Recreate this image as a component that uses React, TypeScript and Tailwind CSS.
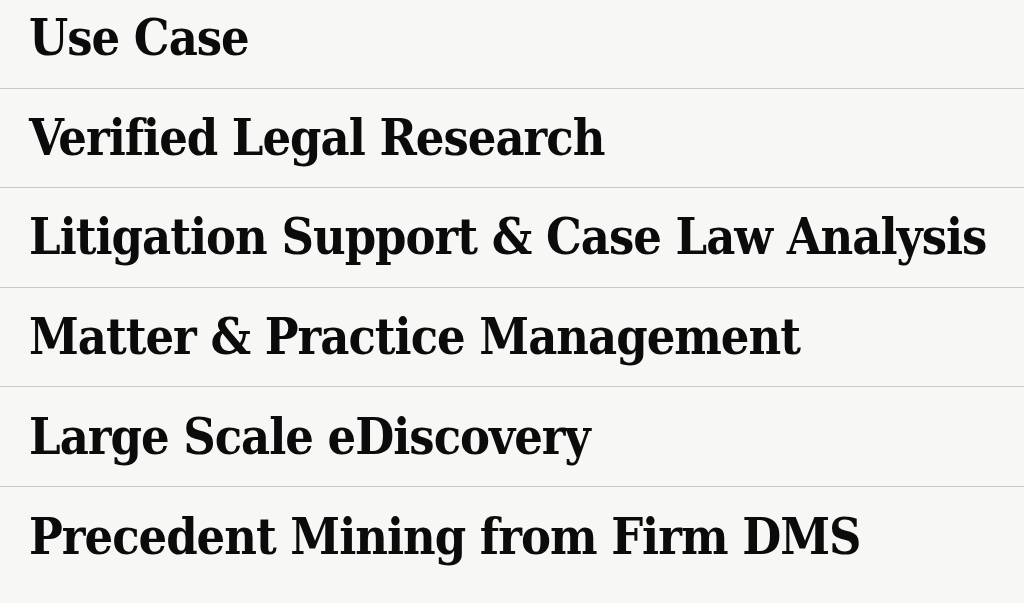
import React from "react";

const rows = [
  "Use Case",
  "Verified Legal Research",
  "Litigation Support & Case Law Analysis",
  "Matter & Practice Management",
  "Large Scale eDiscovery",
  "Precedent Mining from Firm DMS",
];

export default function App() {
  return (
    <div className="w-[1024px] h-[603px] overflow-hidden bg-[#f7f7f6]">
      <div className="-mt-[11px] flex flex-col">
        {rows.map((r, i) => (
          <div
            key={r}
            className={
              "h-[99.6px] flex items-center pl-[29px] " +
              (i < rows.length - 1 ? "border-b border-[#c9c9c7]" : "")
            }
          >
            <span
              className="text-[50px] font-bold text-[#0b0b0b] tracking-[-1px] leading-none"
              style={{ fontFamily: '"DejaVu Serif Condensed", "DejaVu Serif", serif' }}
            >
              {r}
            </span>
          </div>
        ))}
      </div>
    </div>
  );
}
